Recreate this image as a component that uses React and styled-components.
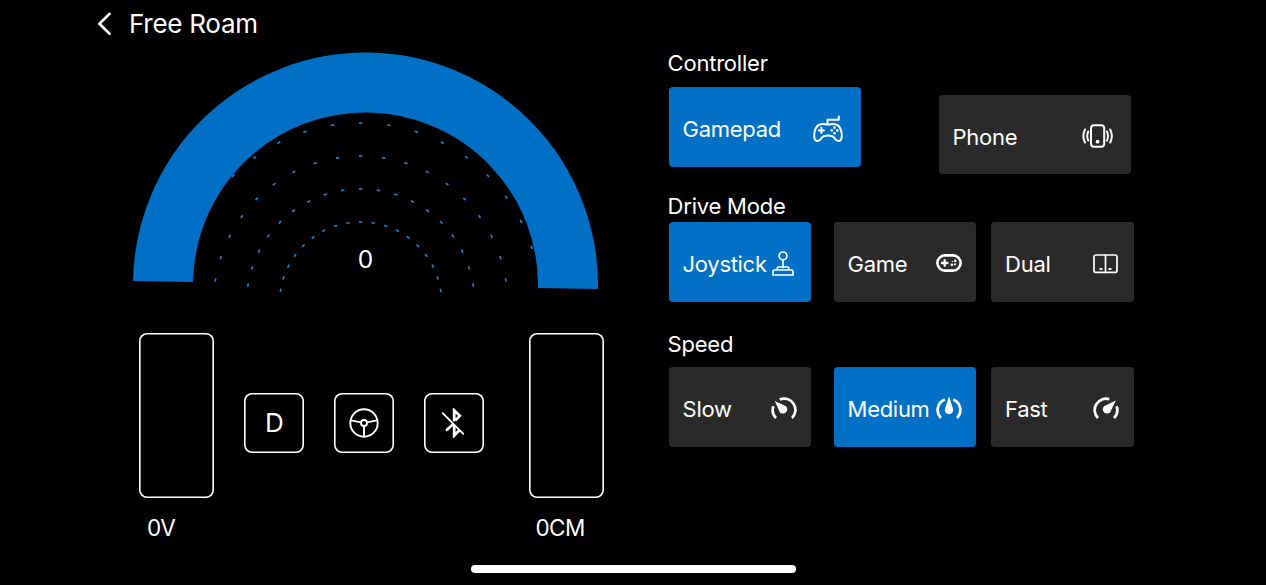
import React from 'react';
import styled, { createGlobalStyle } from 'styled-components';

const BLUE = '#0070c6';
const GREY = '#2a2a2a';

const GlobalStyle = createGlobalStyle`
  *, *::before, *::after { box-sizing: border-box; }
  html, body { margin: 0; background: #000; }
  body {
    font-family: Inter, "Liberation Sans", sans-serif;
    color: #fff;
    overflow: hidden;
  }
`;

const Screen = styled.main`
  display: grid;
  grid-template-columns: 667.6px 1fr;
  grid-template-rows: 48px 517px 20px;
  width: 1266px;
  height: 585px;
  background: #000;
`;

const Header = styled.header`
  grid-column: 1 / -1;
  display: flex;
  align-items: center;
  gap: 17px;
  padding-left: 97px;
`;

const Title = styled.h1`
  margin: 0;
  font-size: 26px;
  line-height: 48px;
  font-weight: 400;
  letter-spacing: -0.27px;
`;

const Dashboard = styled.section`
  display: flex;
  flex-direction: column;
  padding-left: 132px;
`;

const Dial = styled.div`
  display: grid;
  width: 467px;
  height: 250px;
`;

const DialArt = styled.svg`
  grid-area: 1 / 1;
  display: block;
`;

const DialValue = styled.span`
  grid-area: 1 / 1;
  justify-self: center;
  align-self: start;
  margin-top: 195px;
  font-size: 24.5px;
  line-height: 32px;
`;

const Instruments = styled.div`
  display: flex;
  align-items: flex-start;
  width: 480px;
  padding: 35px 0 0 7.4px;
`;

const Gauge = styled.div`
  width: 75px;
`;

const GaugeFrame = styled.div`
  width: 75px;
  height: 165px;
  border-radius: 8px;
  box-shadow: inset 0 0 0 1.6px #fff;
`;

const GaugeLabel = styled.div`
  margin: 16px 0 0 ${({ $indent }) => $indent}px;
  font-size: 22.5px;
  line-height: 28px;
  letter-spacing: -0.5px;
`;

const Keys = styled.div`
  display: flex;
  gap: 30px;
  padding: 60px 45px 0 30px;
`;

const Key = styled.button`
  display: flex;
  align-items: center;
  justify-content: center;
  width: 60px;
  height: 60px;
  padding: 0 ${({ $nudge }) => $nudge || 0}px 0 0;
  border: 0;
  border-radius: 8px;
  box-shadow: inset 0 0 0 1.6px #fff;
  background: transparent;
  color: #fff;
  font: 400 26px/1 Inter, "Liberation Sans", sans-serif;
`;

const Settings = styled.section`
  display: flex;
  flex-direction: column;
`;

const Group = styled.div`
  height: ${({ $height }) => $height}px;
`;

const GroupTitle = styled.h2`
  margin: 0;
  height: ${({ $height }) => $height}px;
  font-size: 22px;
  font-weight: 400;
  line-height: 30px;
  letter-spacing: -0.22px;
`;

const Options = styled.div`
  display: flex;
  padding-left: 1px;
`;

const Option = styled.button`
  display: flex;
  align-items: center;
  justify-content: space-between;
  flex: none;
  width: ${({ $wide }) => ($wide ? 192 : 142.5)}px;
  height: 79.5px;
  margin: ${({ $drop }) => $drop || 0}px 0 0 ${({ $gap }) => $gap || 0}px;
  padding: 0 ${({ $end }) => $end}px 0 14px;
  border: 0;
  border-radius: 4px;
  background: ${({ $active }) => ($active ? BLUE : GREY)};
  color: #fff;
  font: 400 22px/28px Inter, "Liberation Sans", sans-serif;
  letter-spacing: -0.3px;
  white-space: nowrap;

  svg { flex: none; margin-top: ${({ $sink }) => $sink || 0}px; }
`;

const OptionText = styled.span`
  padding-top: 5px;
`;

const HomeArea = styled.footer`
  grid-column: 1 / -1;
  display: flex;
  justify-content: center;
  align-items: flex-start;
`;

const HomeBar = styled.div`
  width: 325px;
  height: 8px;
  border-radius: 4px;
  background: #fff;
`;

function Line({ w, h, stroke = 2, children }) {
  return (
    <svg width={w} height={h} viewBox={`0 0 ${w} ${h}`} fill="none" stroke="#fff"
      strokeWidth={stroke} strokeLinecap="round" strokeLinejoin="round" aria-hidden="true">
      {children}
    </svg>
  );
}

const BackIcon = () => (
  <Line w={15} h={24} stroke={2.6}><path d="M12.6 1.8 2.4 11.8 12.6 21.8" /></Line>
);

const GamepadIcon = () => (
  <Line w={30} h={28} stroke={2}>
    <path d="M14.5 9V4.7H25.8V1.4" />
    <path d="M8 9.2C11 8.7 12 9.6 15 9.6S19 8.7 22 9.2C26.5 9.7 28.8 15 28.8 20.5C28.8 27 24.4 27.6 21.6 23.2C20.3 21.2 19 20.6 15 20.6S9.7 21.2 8.4 23.2C5.6 27.6 1.2 27 1.2 20.5C1.2 15 3.5 9.7 8 9.2Z" />
    <path d="M8.4 12.8V18M5.8 15.4H11" />
    <g fill="#fff" stroke="none">
      <circle cx="21.5" cy="12.6" r="1.3" /><circle cx="21.5" cy="18.2" r="1.3" />
      <circle cx="18.7" cy="15.4" r="1.3" /><circle cx="24.3" cy="15.4" r="1.3" />
    </g>
  </Line>
);

const PhoneIcon = () => (
  <Line w={31} h={24} stroke={2}>
    <rect x="9" y="1.2" width="13.2" height="21.6" rx="3" />
    <path d="M6.2 7.5Q4.2 12 6.2 16.5M3 5.5Q-.4 12 3 18.5M25 7.5Q27 12 25 16.5M28.2 5.5Q31.6 12 28.2 18.5" />
    <circle cx="15.6" cy="17.7" r="1.9" fill="#fff" stroke="none" />
  </Line>
);

const JoystickIcon = () => (
  <Line w={22} h={25} stroke={1.7}>
    <circle cx="11" cy="4.9" r="3.9" />
    <path d="M11 8.8V16.4M5.3 19V16.9Q5.3 16 6.2 16H15.8Q16.7 16 16.7 16.9V19M2.5 19H19.5Q21 19 21 20.5V24H1V20.5Q1 19 2.5 19Z" />
  </Line>
);

const GameIcon = () => (
  <Line w={26} h={18} stroke={2.6}>
    <rect x="1.4" y="1.4" width="23.2" height="15.2" rx="7.6" />
    <path d="M8.7 6.2V11.8M5.9 9H11.5" strokeWidth="2.3" />
    <g fill="#fff" stroke="none">
      <circle cx="19.2" cy="6.9" r="1.4" /><circle cx="15.9" cy="10.8" r="1.4" />
      <circle cx="16.4" cy="7.6" r=".7" /><circle cx="19" cy="10.3" r="1.1" />
    </g>
  </Line>
);

const DualIcon = () => (
  <Line w={25} h={20} stroke={1.7}>
    <rect x="1" y="1" width="23" height="17.4" rx="2" />
    <path d="M12.5 1V18.4" />
    <path d="M7.4 15H8.6M16.4 15H17.6" strokeWidth="2.2" />
  </Line>
);

const SlowIcon = () => (
  <Line w={26} h={24} stroke={2.7}>
    <path d="M5 21A11.3 11.3 0 0 1 2.4 9.2M8.7 2.5A11.3 11.3 0 0 1 21 21" strokeLinecap="butt" />
    <path d="M3.8 4 15 9.2A4.3 4.3 0 1 1 8.8 15.2Z" fill="#fff" stroke="none" />
  </Line>
);

const MediumIcon = () => (
  <Line w={26} h={24} stroke={2.7}>
    <path d="M8.8 2.5A11.3 11.3 0 0 0 5 21M17.2 2.5A11.3 11.3 0 0 1 21 21" strokeLinecap="butt" />
    <path d="M13 -1 16.8 11.2A4.2 4.2 0 1 1 9.2 11.2Z" fill="#fff" stroke="none" />
  </Line>
);

const FastIcon = () => (
  <Line w={26} h={24} stroke={2.7}>
    <path d="M16.3 2.2A11.3 11.3 0 0 0 5 21M23.6 9.2A11.3 11.3 0 0 1 21 21" strokeLinecap="butt" />
    <path d="M22.8 3.6 17.2 15.2A4.3 4.3 0 1 1 11 9.2Z" fill="#fff" stroke="none" />
  </Line>
);

const WheelIcon = () => (
  <Line w={30} h={30} stroke={1.9}>
    <circle cx="15" cy="15" r="13.7" />
    <circle cx="15" cy="15" r="3" />
    <path d="M2 12.4 12 14.4M28 12.4 18 14.4M15 18V28.5" />
  </Line>
);

const BluetoothOffIcon = () => (
  <Line w={24} h={30} stroke={2}>
    <path d="M1.7 5.2 22.3 25.8" strokeWidth="1.8" />
    <path d="M13.2 12.2V2.4L18.8 7.8 15.2 11.6M6 21.8 11.4 16.8M13.2 18.2V27.6L18 22.8" strokeWidth="2.8" strokeLinejoin="miter" />
  </Line>
);

const RINGS = [180, 147, 114, 81];
const STEPS = Array.from({ length: 19 }, (_, i) => (i - 9) * 9);

function SpeedDial() {
  return (
    <Dial>
      <DialArt width="467" height="250" viewBox="132 48 467 250">
        {RINGS.map((r) => STEPS.map((a) => (
          <path key={`${r}:${a}`} d={`M358.9 ${303 - r}H362.3`} stroke="#2580c8" strokeWidth="1.7"
            transform={`rotate(${a} 360.6 303)`} />
        )))}
        <path d="M163 281.5A202.5 202.5 0 0 1 568 288.5" fill="none" stroke={BLUE} strokeWidth="60" />
      </DialArt>
      <DialValue>0</DialValue>
    </Dial>
  );
}

export default function App() {
  return (
    <>
      <GlobalStyle />
      <Screen>
        <Header>
          <BackIcon />
          <Title>Free Roam</Title>
        </Header>
        <Dashboard>
          <SpeedDial />
          <Instruments>
            <Gauge>
              <GaugeFrame />
              <GaugeLabel $indent={7.5}>0V</GaugeLabel>
            </Gauge>
            <Keys>
              <Key>D</Key>
              <Key $nudge={1}><WheelIcon /></Key>
              <Key $nudge={3}><BluetoothOffIcon /></Key>
            </Keys>
            <Gauge>
              <GaugeFrame />
              <GaugeLabel $indent={6}>0CM</GaugeLabel>
            </Gauge>
          </Instruments>
        </Dashboard>
        <Settings>
          <Group $height={143}>
            <GroupTitle $height={39}>Controller</GroupTitle>
            <Options>
              <Option $wide $active $end={17.5} $sink={4}><OptionText>Gamepad</OptionText><GamepadIcon /></Option>
              <Option $wide $gap={78} $drop={7.5} $end={17.5} $sink={3}><OptionText>Phone</OptionText><PhoneIcon /></Option>
            </Options>
          </Group>
          <Group $height={137.6}>
            <GroupTitle $height={31}>Drive Mode</GroupTitle>
            <Options>
              <Option $active $end={17} $sink={3}><OptionText>Joystick</OptionText><JoystickIcon /></Option>
              <Option $gap={22.5} $end={14.6} $sink={3}><OptionText>Game</OptionText><GameIcon /></Option>
              <Option $gap={15} $end={15.6} $sink={4}><OptionText>Dual</OptionText><DualIcon /></Option>
            </Options>
          </Group>
          <Group $height={150}>
            <GroupTitle $height={38.5}>Speed</GroupTitle>
            <Options>
              <Option $end={14.6} $sink={4}><OptionText>Slow</OptionText><SlowIcon /></Option>
              <Option $active $gap={22.5} $end={14.6} $sink={4}><OptionText>Medium</OptionText><MediumIcon /></Option>
              <Option $gap={15} $end={14.6} $sink={4}><OptionText>Fast</OptionText><FastIcon /></Option>
            </Options>
          </Group>
        </Settings>
        <HomeArea><HomeBar /></HomeArea>
      </Screen>
    </>
  );
}
